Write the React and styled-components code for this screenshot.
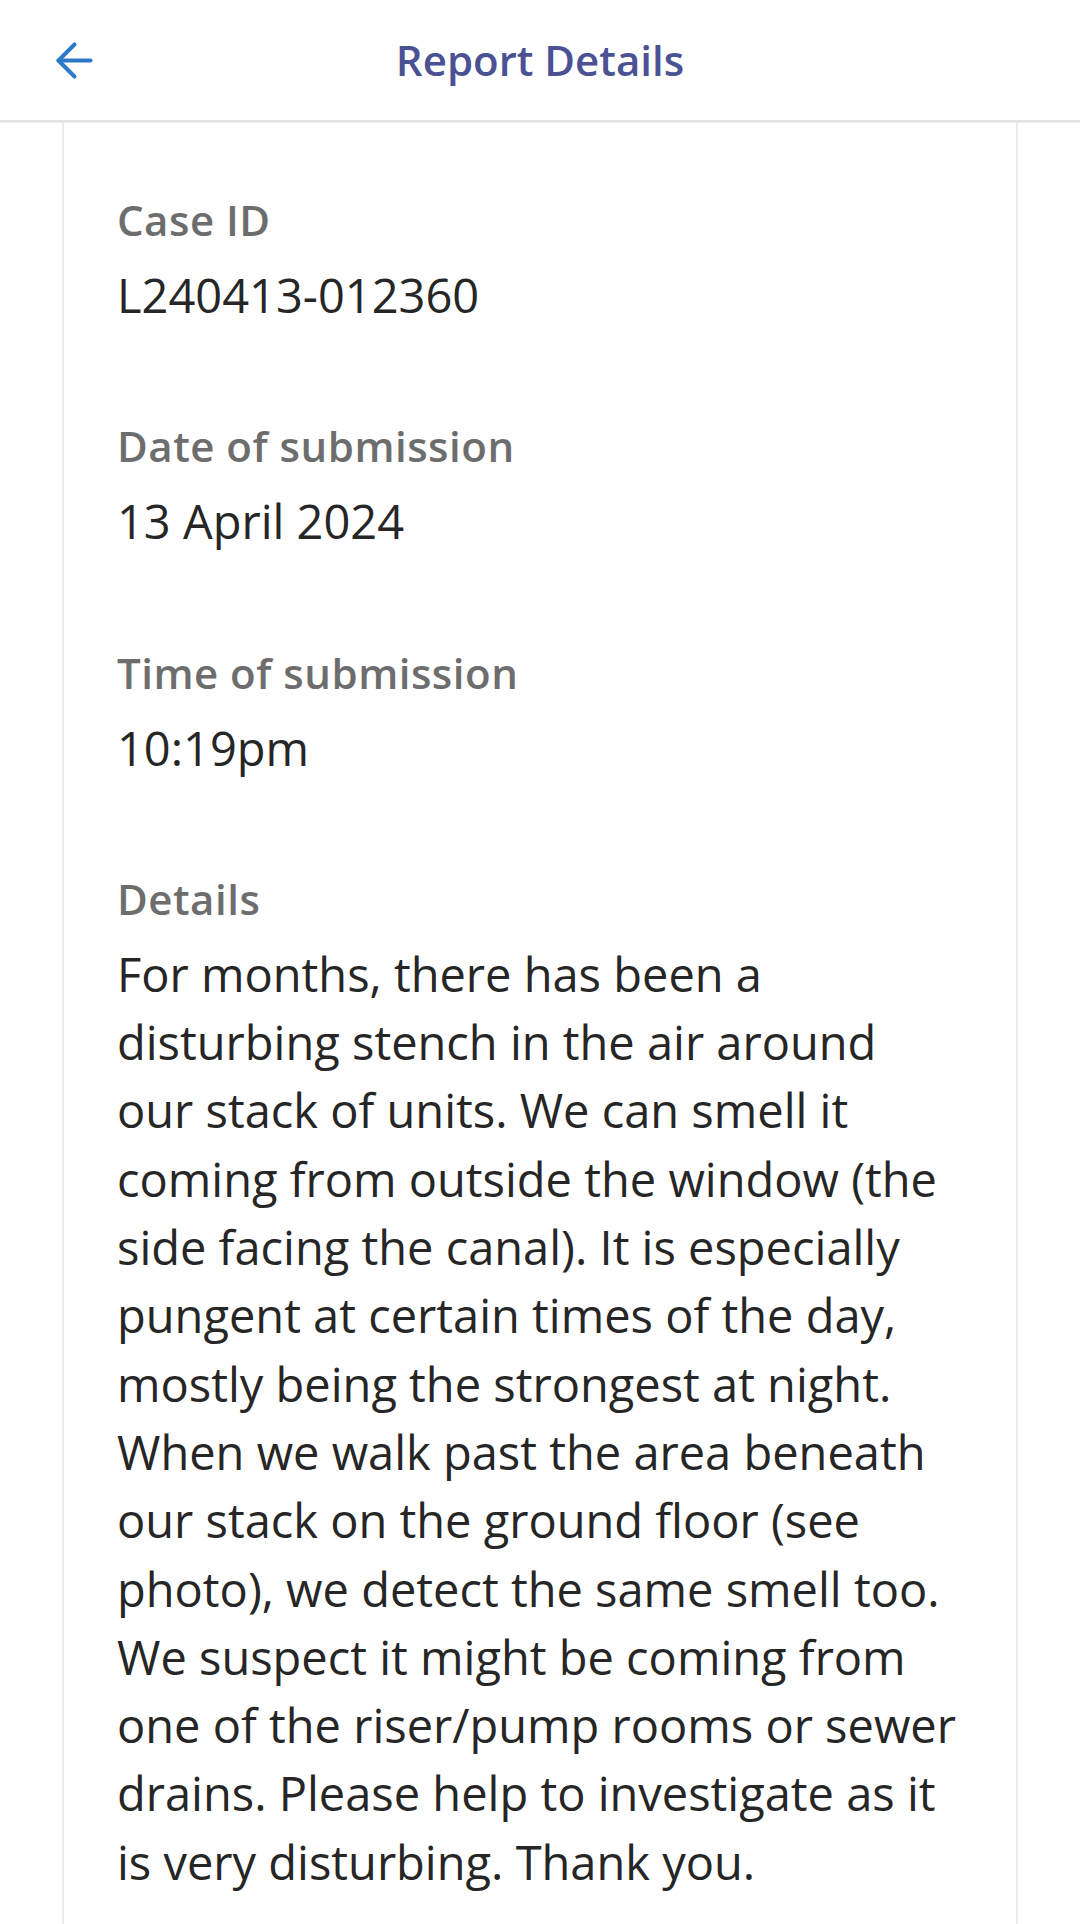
import styled, { createGlobalStyle } from "styled-components";
import { ArrowLeft } from "lucide-react";

const fields = [
  { label: "Case ID", value: "L240413-012360" },
  { label: "Date of submission", value: "13 April 2024" },
  { label: "Time of submission", value: "10:19pm" },
  {
    label: "Details",
    value:
      "For months, there has been a disturbing stench in the air around our stack of units. We can smell it coming from outside the window (the side facing the canal). It is especially pungent at certain times of the day, mostly being the strongest at night. When we walk past the area beneath our stack on the ground floor (see photo), we detect the same smell too. We suspect it might be coming from one of the riser/pump rooms or sewer drains. Please help to investigate as it is very disturbing. Thank you.",
  },
];

const App = () => {
  return (
    <Page>
      <GlobalStyle />
      <Header>
        <BackButton aria-label="Back">
          <ArrowLeft size={55} strokeWidth={1.75} />
        </BackButton>
        <Title>Report Details</Title>
        <span />
      </Header>
      <Card>
        {fields.map((field) => (
          <Field key={field.label}>
            <Label>{field.label}</Label>
            <Value>{field.value}</Value>
          </Field>
        ))}
      </Card>
    </Page>
  );
};

export default App;

const GlobalStyle = createGlobalStyle`
  html, body {
    margin: 0;
    padding: 0;
    overflow: hidden;
    background: #ffffff;
  }
  * {
    box-sizing: border-box;
  }
`;

const Page = styled.div`
  display: flex;
  flex-direction: column;
  min-height: 1924px;
  font-family: "Open Sans", "Noto Sans", sans-serif;
  background: #ffffff;
`;

const Header = styled.header`
  flex-shrink: 0;
  display: grid;
  grid-template-columns: 140px 1fr 140px;
  align-items: center;
  height: 122px;
  border-bottom: 2px solid #e2e4e4;
  box-shadow: 0 1px 0 #eef0f0;
`;

const BackButton = styled.button`
  display: flex;
  align-items: center;
  justify-content: flex-start;
  padding: 0 0 0 47px;
  border: none;
  background: none;
  color: #2c78c9;
  cursor: pointer;
  height: 100%;
`;

const Title = styled.h1`
  margin: 0;
  text-align: center;
  font-size: 42px;
  font-weight: 600;
  color: #4a5294;
  line-height: 1;
`;

const Card = styled.main`
  flex: 1 0 auto;
  margin: 0 62px;
  padding: 70px 53px 70px 53px;
  border-left: 2px solid #ebebeb;
  border-right: 2px solid #ebebeb;
  display: flex;
  flex-direction: column;
  gap: 89px;
`;

const Field = styled.section`
  display: flex;
  flex-direction: column;
  gap: 14px;
`;

const Label = styled.div`
  font-size: 42px;
  line-height: 55px;
  font-weight: 600;
  letter-spacing: 0.5px;
  color: #6d6d6d;
`;

const Value = styled.div`
  font-size: 47px;
  line-height: 68.3px;
  font-weight: 400;
  color: #262626;
`;
